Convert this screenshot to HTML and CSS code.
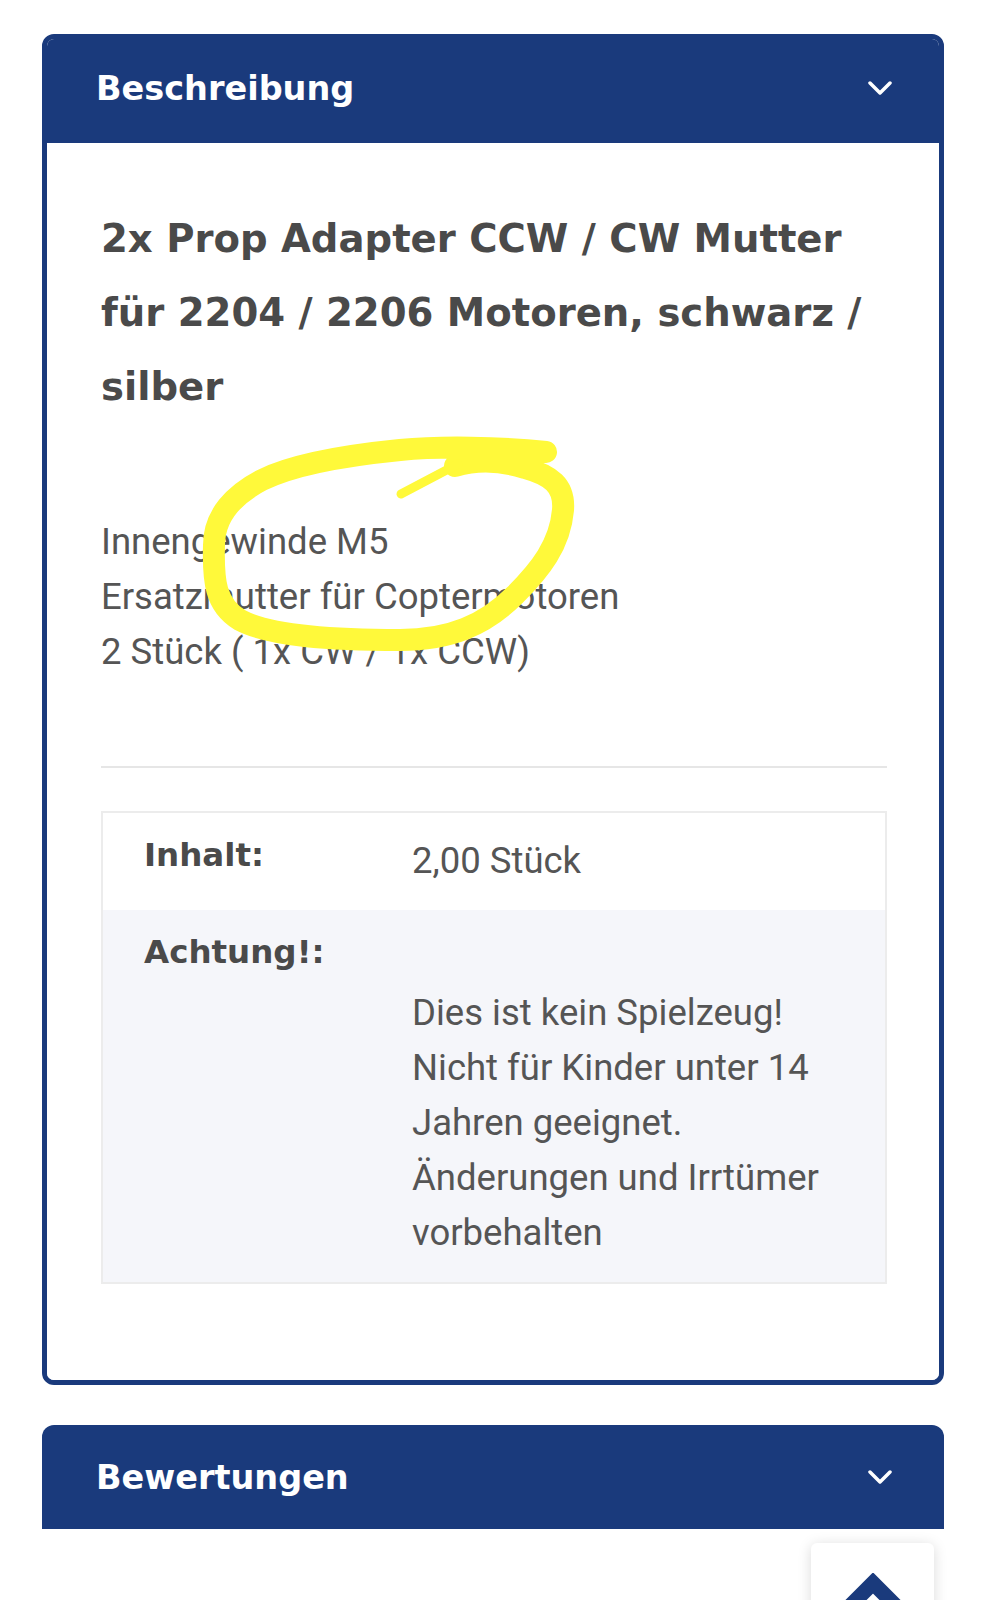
FILE: index.html
```html
<!DOCTYPE html>
<html lang="de">
<head>
  <meta charset="UTF-8">
  <meta name="viewport" content="width=device-width, initial-scale=1.0">
  <title>2x Prop Adapter CCW / CW Mutter</title>
  <link rel="stylesheet" href="styles.css">
</head>
<body>
  <div class="page">
    <section class="accordion open">
      <div class="acc-head">
        <span>Beschreibung</span>
        <svg class="chev" width="24" height="14" viewBox="0 0 24 14"><path d="M2 2l10 10 10-10" fill="none" stroke="#fff" stroke-width="3.5" stroke-linecap="round" stroke-linejoin="round"/></svg>
      </div>
      <div class="acc-body">
        <h2 class="product-title">2x Prop Adapter CCW / CW Mutter für 2204 / 2206 Motoren, schwarz / silber</h2>
        <p class="desc">Innengewinde M5<br>Ersatzmutter für Coptermotoren<br>2 Stück ( 1x CW / 1x CCW)</p>
        <hr class="divider">
        <table class="props">
          <tr>
            <th>Inhalt:</th>
            <td>2,00 Stück</td>
          </tr>
          <tr class="alt">
            <th>Achtung!:</th>
            <td><br>Dies ist kein Spielzeug!<br>Nicht für Kinder unter 14 Jahren geeignet.<br>Änderungen und Irrtümer vorbehalten</td>
          </tr>
        </table>
      </div>
    </section>

    <section class="accordion closed">
      <div class="acc-head">
        <span>Bewertungen</span>
        <svg class="chev" width="24" height="14" viewBox="0 0 24 14"><path d="M2 2l10 10 10-10" fill="none" stroke="#fff" stroke-width="3.5" stroke-linecap="round" stroke-linejoin="round"/></svg>
      </div>
    </section>
  </div>

  <a class="to-top" href="#">
    <svg width="72" height="40" viewBox="0 0 72 40"><path d="M8 38L36 10l28 28" fill="none" stroke="#1a3a7c" stroke-width="15" stroke-linejoin="miter"/></svg>
  </a>

  <!-- Markierung aus dem Screenshot -->
  <svg class="scribble" width="987" height="1600" viewBox="0 0 987 1600">
    <path d="M546 452 C500 447 440 446 400 450 C340 456 290 466 262 480 C235 494 214 515 214 545 C213 580 215 605 240 620 C270 636 330 640 400 640 C450 640 485 625 515 595 C540 570 560 545 563 510 C565 485 550 475 525 468 C500 460 475 460 455 466" fill="none" stroke="#fff93a" stroke-width="22" stroke-linecap="round" stroke-linejoin="round"/>
    <path d="M458 464 L401 494" fill="none" stroke="#fff93a" stroke-width="9" stroke-linecap="round"/>
  </svg>
</body>
</html>
```

FILE: styles.css
```css
* {
  box-sizing: border-box;
  margin: 0;
  padding: 0;
}

body {
  font-family: 'Roboto', 'Liberation Sans', sans-serif;
  background-color: #fff;
  color: #555;
  height: 1600px;
  overflow: hidden;
}

.page {
  padding: 34px 43px 0 42px;
}

.accordion {
  border-radius: 12px;
  overflow: hidden;
}

.accordion.open {
  border: 5px solid #1a3a7c;
}

.accordion.closed {
  margin-top: 40px;
  border-radius: 12px 12px 0 0;
}

.acc-head {
  display: flex;
  align-items: center;
  justify-content: space-between;
  height: 104px;
  padding: 0 47px 6px 49px;
  background-color: #1a3a7c;
  color: #fff;
  font-family: 'DejaVu Sans', sans-serif;
  font-weight: 700;
  font-size: 33.5px;
}

.accordion.closed .acc-head {
  padding: 0 52px 0 54px;
}

.acc-body {
  padding: 59px 52px 96px 54px;
  background-color: #fff;
}

.product-title {
  font-family: 'DejaVu Sans', sans-serif;
  font-weight: 700;
  font-size: 38.6px;
  line-height: 74px;
  color: #4a4a4a;
}

.desc {
  margin-top: 90px;
  font-size: 36.5px;
  line-height: 55px;
  color: #555;
}

.divider {
  margin-top: 87px;
  border: none;
  border-top: 2px solid #e6e6e6;
}

.props {
  width: 100%;
  margin-top: 43px;
  border-collapse: collapse;
  border: 2px solid #ececec;
}

.props th,
.props td {
  text-align: left;
  vertical-align: top;
  padding: 20px 20px 22px 0;
}

.props th {
  width: 310px;
  padding-left: 41px;
  font-family: 'DejaVu Sans', sans-serif;
  font-weight: 700;
  font-size: 32.5px;
  line-height: 44px;
  color: #4a4a4a;
}

.props td {
  font-size: 36.5px;
  line-height: 55px;
  color: #555;
}

.props tr.alt {
  background-color: #f5f6fa;
}

.to-top {
  position: fixed;
  right: 53px;
  bottom: -66px;
  width: 123px;
  height: 123px;
  display: flex;
  justify-content: center;
  padding-top: 30px;
  background-color: #fff;
  border-radius: 6px;
  box-shadow: 0 2px 14px rgba(0, 0, 0, 0.15);
}

.scribble {
  position: absolute;
  top: 0;
  left: 0;
  pointer-events: none;
}
```
